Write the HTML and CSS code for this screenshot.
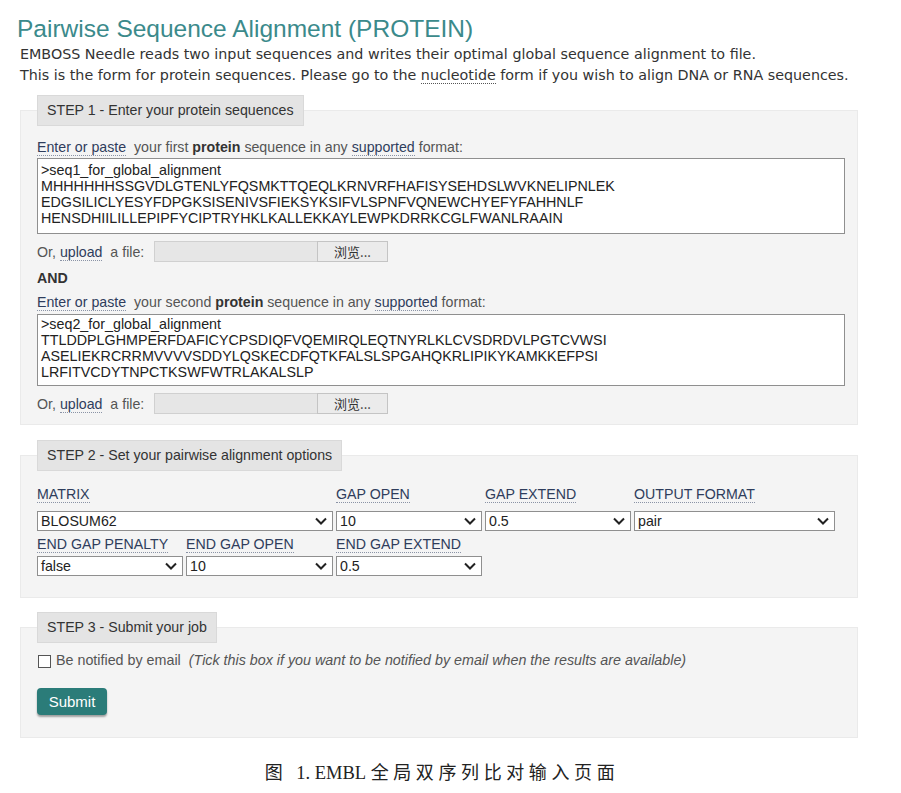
FILE: index.html
```html
<!DOCTYPE html>
<html>
<head>
<meta charset="utf-8">
<link rel="stylesheet" href="styles.css">
</head>
<body>
<div class="page">
  <h1 class="title">Pairwise Sequence Alignment (PROTEIN)</h1>
  <div class="intro">
    <p>EMBOSS Needle reads two input sequences and writes their optimal global sequence alignment to file.</p>
    <p>This is the form for protein sequences. Please go to the <span class="ulink">nucleotide</span> form if you wish to align DNA or RNA sequences.</p>
  </div>

  <fieldset class="panel step1">
    <legend class="tab">STEP 1 - Enter your protein sequences</legend>
    <div class="label first"><span class="link">Enter or paste</span>&nbsp; your first <b>protein</b> sequence in any <span class="link">supported</span> format:</div>
    <div class="seqbox">&gt;seq1_for_global_alignment
MHHHHHHSSGVDLGTENLYFQSMKTTQEQLKRNVRFHAFISYSEHDSLWVKNELIPNLEK
EDGSILICLYESYFDPGKSISENIVSFIEKSYKSIFVLSPNFVQNEWCHYEFYFAHHNLF
HENSDHIILILLEPIPFYCIPTRYHKLKALLEKKAYLEWPKDRRKCGLFWANLRAAIN</div>
    <div class="upload">
      <span class="uplabel">Or, <span class="link">upload</span>&nbsp; a file:</span>
      <span class="filebox"></span><span class="filebtn">浏览...</span>
    </div>
    <div class="and">AND</div>
    <div class="label"><span class="link">Enter or paste</span>&nbsp; your second <b>protein</b> sequence in any <span class="link">supported</span> format:</div>
    <div class="seqbox second">&gt;seq2_for_global_alignment
TTLDDPLGHMPERFDAFICYCPSDIQFVQEMIRQLEQTNYRLKLCVSDRDVLPGTCVWSI
ASELIEKRCRRMVVVVSDDYLQSKECDFQTKFALSLSPGAHQKRLIPIKYKAMKKEFPSI
LRFITVCDYTNPCTKSWFWTRLAKALSLP</div>
    <div class="upload">
      <span class="uplabel">Or, <span class="link">upload</span>&nbsp; a file:</span>
      <span class="filebox"></span><span class="filebtn">浏览...</span>
    </div>
  </fieldset>

  <fieldset class="panel step2">
    <legend class="tab">STEP 2 - Set your pairwise alignment options</legend>
    <div class="opts">
      <div class="opt span2"><span class="olabel">MATRIX</span><div class="sel"><span>BLOSUM62</span><svg class="chev" viewBox="0 0 12 8" width="12" height="8"><path d="M1 1.5 L6 6.5 L11 1.5" fill="none" stroke="#222" stroke-width="2"/></svg></div></div>
      <div class="opt"><span class="olabel">GAP OPEN</span><div class="sel"><span>10</span><svg class="chev" viewBox="0 0 12 8" width="12" height="8"><path d="M1 1.5 L6 6.5 L11 1.5" fill="none" stroke="#222" stroke-width="2"/></svg></div></div>
      <div class="opt"><span class="olabel">GAP EXTEND</span><div class="sel"><span>0.5</span><svg class="chev" viewBox="0 0 12 8" width="12" height="8"><path d="M1 1.5 L6 6.5 L11 1.5" fill="none" stroke="#222" stroke-width="2"/></svg></div></div>
      <div class="opt"><span class="olabel">OUTPUT FORMAT</span><div class="sel"><span>pair</span><svg class="chev" viewBox="0 0 12 8" width="12" height="8"><path d="M1 1.5 L6 6.5 L11 1.5" fill="none" stroke="#222" stroke-width="2"/></svg></div></div>
      <div class="opt row2"><span class="olabel">END GAP PENALTY</span><div class="sel"><span>false</span><svg class="chev" viewBox="0 0 12 8" width="12" height="8"><path d="M1 1.5 L6 6.5 L11 1.5" fill="none" stroke="#222" stroke-width="2"/></svg></div></div>
      <div class="opt row2"><span class="olabel">END GAP OPEN</span><div class="sel"><span>10</span><svg class="chev" viewBox="0 0 12 8" width="12" height="8"><path d="M1 1.5 L6 6.5 L11 1.5" fill="none" stroke="#222" stroke-width="2"/></svg></div></div>
      <div class="opt row2"><span class="olabel">END GAP EXTEND</span><div class="sel"><span>0.5</span><svg class="chev" viewBox="0 0 12 8" width="12" height="8"><path d="M1 1.5 L6 6.5 L11 1.5" fill="none" stroke="#222" stroke-width="2"/></svg></div></div>
    </div>
  </fieldset>

  <fieldset class="panel step3">
    <legend class="tab">STEP 3 - Submit your job</legend>
    <div class="notify"><span class="cbox"></span><span class="ntext">Be notified by email</span><span class="nhint">(Tick this box if you want to be notified by email when the results are available)</span></div>
    <div class="submit">Submit</div>
  </fieldset>

  <div class="caption"><span class="cjk fig">图</span> <span class="lat">1. EMBL</span> <span class="cjk">全局双序列比对输入页面</span></div>
</div>
</body>
</html>
```
FILE: styles.css
```css
* { box-sizing: border-box; }
html, body { margin: 0; padding: 0; background: #fff; }
body { font-family: "Liberation Sans", Arial, sans-serif; color: #333; }
.page { width: 901px; padding: 14px 0 0 20px; }

.title {
  margin: 0 0 0 -3px;
  font-size: 24.5px;
  line-height: 30px;
  font-weight: normal;
  color: #3b8a8b;
}
.intro { font-family: "DejaVu Sans", Verdana, sans-serif; font-size: 14.3px; color: #333; }
.intro p { margin: 0; line-height: 21px; }
.ulink { border-bottom: 1px dotted #555; }

.panel {
  width: 838px;
  margin: 0;
  padding: 0 16px 10px 16px;
  border: 1px solid #eaeaea;
  background: #f4f4f4;
  min-width: 0;
}
.step1 { margin-top: 9px; }
.step2 { margin-top: 15px; padding-bottom: 21px; }
.step3 { margin-top: 14px; padding-bottom: 22px; }
.tab {
  margin: 0;
  padding: 6px 9px;
  font-size: 14.2px;
  line-height: 17px;
  color: #333;
  background: #e4e4e4;
  border: 1px solid #d9d9d9;
}

.label { font-size: 14.2px; line-height: 16px; color: #555; margin-top: 8px; }
.label.first { margin-top: 13px; }
.label b { color: #333; }
.link { color: #2f3d5c; border-bottom: 1px dotted #8a93a6; }

.seqbox {
  margin-top: 3px;
  height: 76px;
  width: 808px;
  padding: 3px 4px 0 3px;
  background: #fff;
  border: 1px solid #8f8f8f;
  font-size: 14.3px;
  line-height: 16px;
  color: #222;
  white-space: pre;
  overflow: hidden;
}
.seqbox.second { margin-top: 4px; height: 72px; padding-top: 1px; }

.upload { display: flex; align-items: center; margin-top: 7px; height: 21px; font-size: 14.2px; color: #555; }
.uplabel { width: 117px; }
.filebox { width: 163px; height: 21px; background: #e6e6e6; border: 1px solid #d0d0d0; border-right: none; }
.filebtn {
  width: 71px; height: 21px;
  background: #ebebeb;
  border: 1px solid #c4c4c4;
  font-family: "Noto Sans CJK SC", sans-serif;
  font-size: 13px; line-height: 19px;
  text-align: center; color: #333;
}
.and { margin-top: 8px; font-weight: bold; font-size: 14.2px; line-height: 16px; color: #333; }

.opts {
  display: grid;
  grid-template-columns: 146px 147px 146px 146px 201px;
  column-gap: 3px;
  margin-top: 15px;
}
.opt { display: flex; flex-direction: column; align-items: flex-start; }
.opt.span2 { grid-column: span 2; }
.opt.row2 { margin-top: 5px; }
.olabel { font-size: 14.2px; line-height: 16px; color: #2f3d5c; border-bottom: 1px dotted #8a93a6; }
.opt .olabel { margin-bottom: 8px; }
.opt.row2 .olabel { margin-bottom: 3px; }
.sel {
  width: 100%;
  height: 20px;
  display: flex; align-items: center; justify-content: space-between;
  padding: 0 5px 0 3px;
  background: #fff;
  border: 1px solid #8f8f8f;
  font-size: 14.2px; color: #222;
}
.chev { display: block; }

.notify { display: flex; align-items: center; margin-top: 9px; font-size: 14.3px; line-height: 16px; color: #555; }
.cbox { width: 13px; height: 13px; border: 1px solid #555; background: #fff; margin: 2px 5px 0 1px; }
.nhint { font-style: italic; margin-left: 8px; }
.submit {
  margin-top: 20px;
  width: 70px; height: 27px;
  background: #2b7c79;
  color: #fff;
  font-size: 15px; line-height: 27px;
  text-align: center;
  border-radius: 4px;
  box-shadow: 0 2px 2px rgba(0,0,0,0.35);
}

.caption {
  margin-top: 21px;
  margin-left: -20px;
  width: 901px;
  padding-right: 17px;
  text-align: center;
  font-family: "Liberation Serif", "Noto Sans CJK SC", serif;
  font-size: 18px;
  line-height: 24px;
  color: #222;
}
.cjk { font-family: "Noto Sans CJK SC", sans-serif; letter-spacing: 4.6px; }
.cjk.fig { letter-spacing: 9px; }
.lat { font-family: "Liberation Serif", serif; font-size: 18.5px; }
```
